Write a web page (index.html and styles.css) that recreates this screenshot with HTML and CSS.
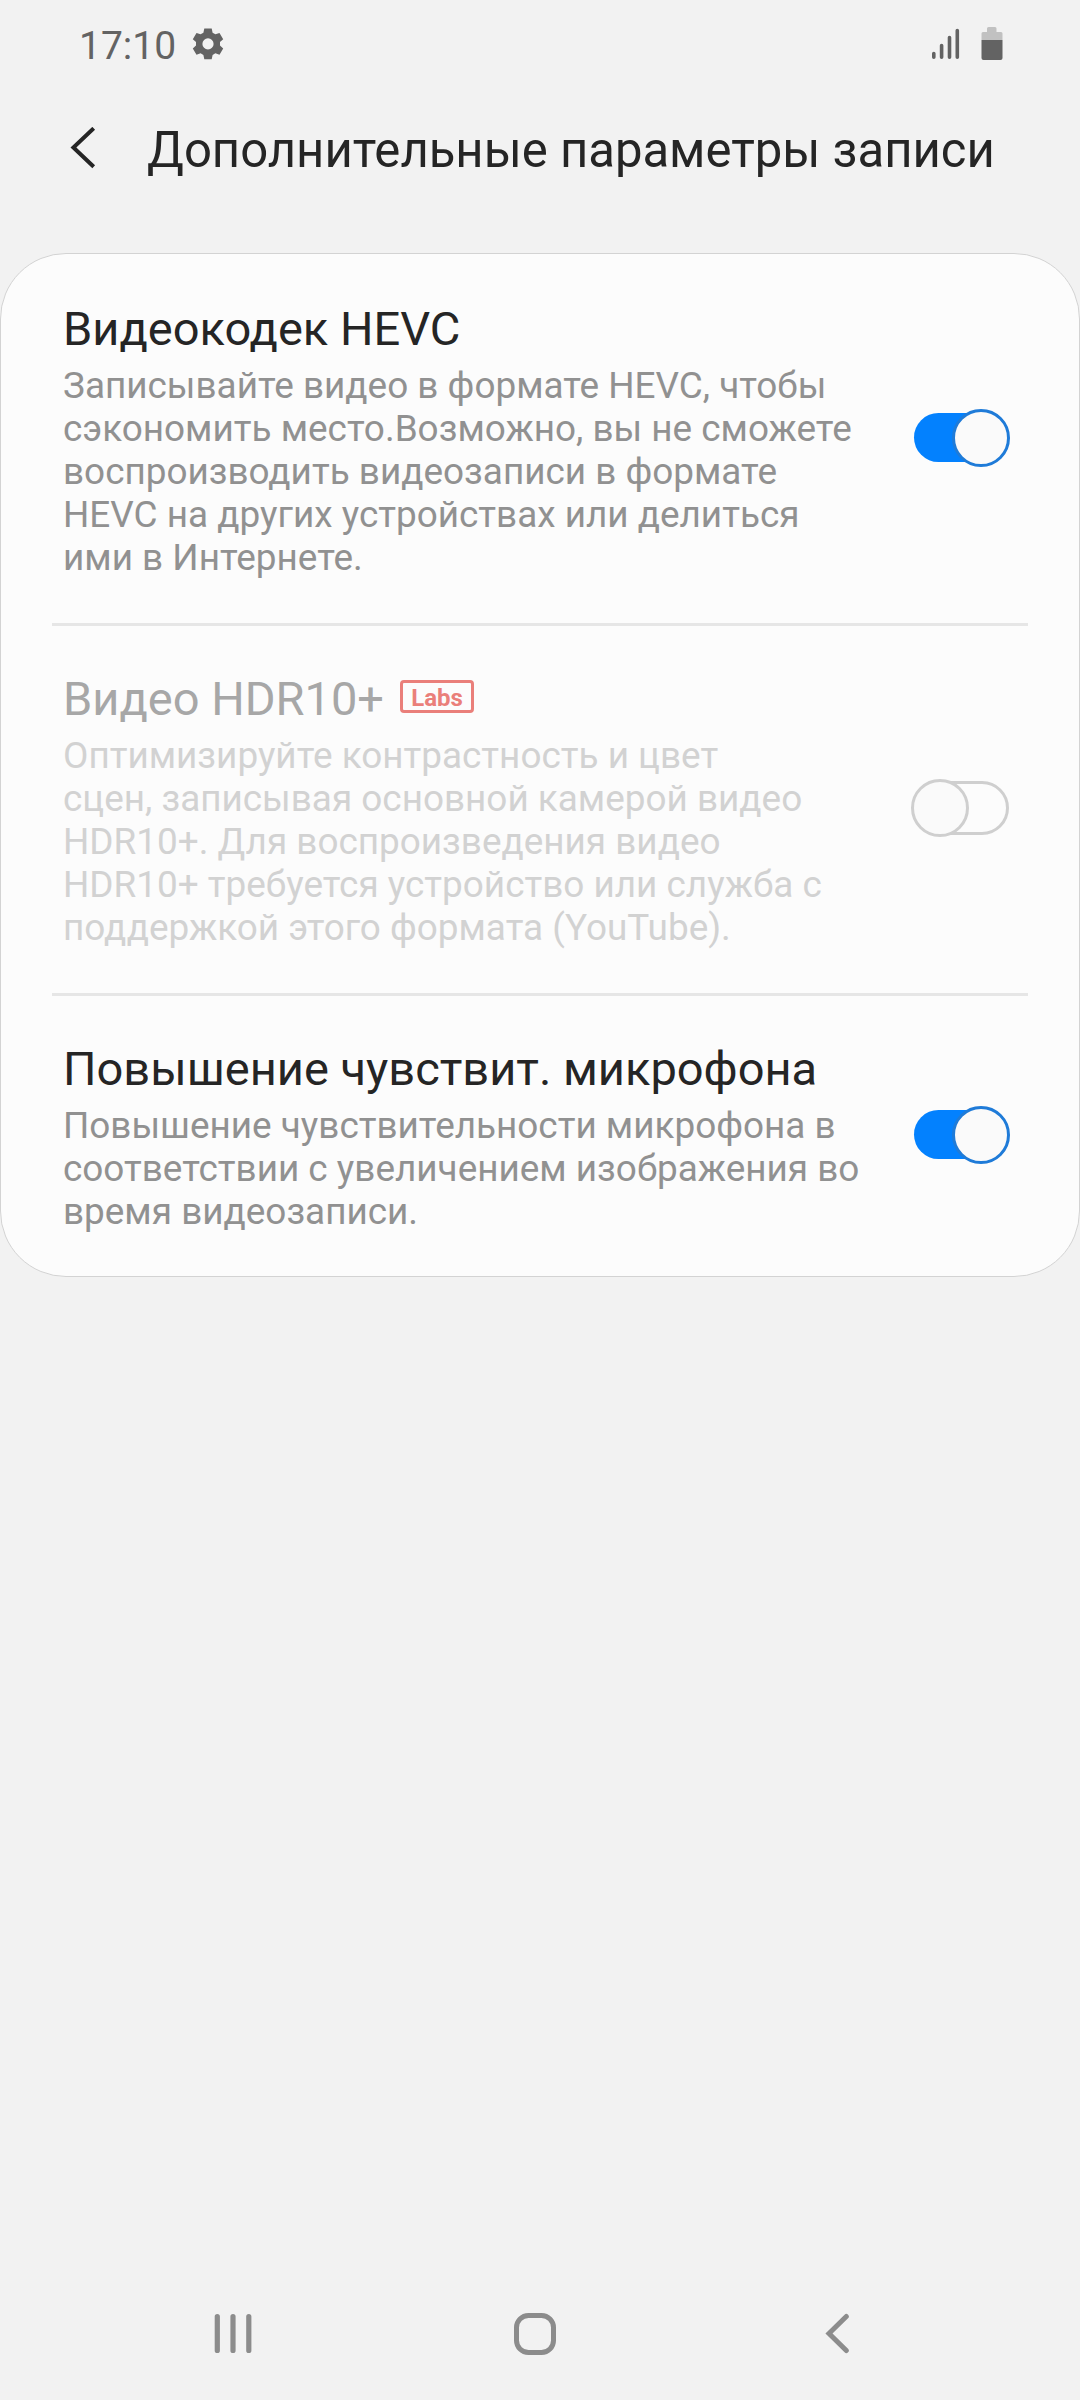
FILE: index.html
```html
<!DOCTYPE html>
<html lang="ru">
<head>
<meta charset="utf-8">
<title>Дополнительные параметры записи</title>
<link rel="stylesheet" href="styles.css">
</head>
<body>
<div class="screen">
  <div class="status">
    <span class="clock">17:10</span>
    <svg class="gear" width="32" height="32" viewBox="0 0 32 32"><path fill="#636363" fill-rule="evenodd" d="M12.3 0.5h7.4l.9 4.2 2.8 1.6 4.1-1.4 3.7 6.3-3.2 2.9v3.4l3.2 2.9-3.7 6.3-4.1-1.4-2.8 1.6-.9 4.3h-7.4l-.9-4.3-2.8-1.6-4.1 1.4-3.7-6.3 3.2-2.9v-3.4l-3.2-2.9 3.7-6.3 4.1 1.4 2.8-1.6zM16 10.3a5.6 5.6 0 1 0 0 11.2 5.6 5.6 0 0 0 0-11.2z"/></svg>
    <svg class="signal" width="28" height="32" viewBox="0 0 28 32"><path d="M1.8 25.6V29.2M9.6 17.6V29.2M17.5 9.6V29.2M25.3 2.6V29.2" stroke="#636363" stroke-width="3.6" stroke-linecap="round"/></svg>
    <svg class="battery" width="22" height="34" viewBox="0 0 22 34"><path fill="#c1c1c1" d="M6 1.500q0-1.500 1.500-1.500h6.500q1.500 0 1.500 1.500V5h4.500q1.500 0 1.500 1.500V13H.5V6.500Q.5 5 2 5h4z"/><path fill="#636363" d="M.5 13h21v18q0 2-2 2h-17q-2 0-2-2z"/></svg>
  </div>
  <div class="header">
    <svg class="back" width="26" height="44" viewBox="0 0 26 44"><path d="M23.700 1.300L3.400 20.500 23.700 39.700" fill="none" stroke="#252525" stroke-width="4"/></svg>
    <h1>Дополнительные параметры записи</h1>
  </div>
  <div class="card">
    <div class="item">
      <div class="text">
        <h2>Видеокодек HEVC</h2>
        <p>Записывайте видео в формате HEVC, чтобы<br>сэкономить место.Возможно, вы не сможете<br>воспроизводить видеозаписи в формате<br>HEVC на других устройствах или делиться<br>ими в Интернете.</p>
      </div>
      <div class="toggle on"><span class="knob"></span></div>
    </div>
    <div class="item disabled">
      <div class="text">
        <h2>Видео HDR10+<span class="labs">Labs</span></h2>
        <p>Оптимизируйте контрастность и цвет<br>сцен, записывая основной камерой видео<br>HDR10+. Для воспроизведения видео<br>HDR10+ требуется устройство или служба с<br>поддержкой этого формата (YouTube).</p>
      </div>
      <div class="toggle off"><span class="knob"></span></div>
    </div>
    <div class="item">
      <div class="text">
        <h2>Повышение чувствит. микрофона</h2>
        <p>Повышение чувствительности микрофона в<br>соответствии с увеличением изображения во<br>время видеозаписи.</p>
      </div>
      <div class="toggle on"><span class="knob"></span></div>
    </div>
  </div>
  <div class="nav">
    <svg width="40" height="42" viewBox="0 0 40 42"><path d="M3.300 3.500V37.500M19 3.500V37.500M34.800 3.500V37.500" stroke="#8c8c8c" stroke-width="5.200" stroke-linecap="round"/></svg>
    <svg class="home" width="42" height="42" viewBox="0 0 42 42"><rect x="2.500" y="2.500" width="37" height="37" rx="12" fill="none" stroke="#8c8c8c" stroke-width="5"/></svg>
    <svg width="26" height="42" viewBox="0 0 26 42"><path d="M21.300 3.500L4 20.500 21.300 37.500" fill="none" stroke="#8c8c8c" stroke-width="5" stroke-linecap="round"/></svg>
  </div>
</div>
</body>
</html>
```

FILE: styles.css
```css
*, *::before { box-sizing: border-box; margin: 0; }
body { background: #f2f2f2; font-family: Roboto, sans-serif; color: #252525; }
svg { display: block; flex: none; }
.screen { width: 1080px; height: 2400px; display: flex; flex-direction: column; }
.status { height: 88px; padding: 27px 77px 0 79px; display: flex; align-items: flex-start; }
.clock { width: 113px; font-size: 39px; line-height: 38px; color: #636363; white-space: nowrap; }
.gear { margin-top: 1px; }
.signal { margin: 1px 0 0 auto; }
.battery { margin-left: 21px; }
.header { height: 165px; padding: 39px 0 0 70px; display: flex; align-items: flex-start; }
h1 { margin-left: 51px; padding-top: 1px; font-size: 49.05px; line-height: 44px; font-weight: 400; white-space: nowrap; }
.card { height: 1024px; border: 1px solid #d3d3d3; border-radius: 66px; background: #fcfcfc; }
.item { position: relative; height: 370px; padding: 46px 69px 0 62px; display: flex; justify-content: space-between; }
.item + .item::before { content: ""; position: absolute; left: 51px; right: 51px; top: -1px; height: 3px; background: #e6e6e6; }
.item:last-child { height: 282px; }
h2 { display: flex; align-items: flex-start; height: 64px; font-size: 47px; line-height: 58px; font-weight: 400; white-space: nowrap; }
p { font-size: 36.9px; line-height: 43px; color: #919191; white-space: nowrap; }
.disabled h2 { color: #a7a7a7; }
.disabled p { color: #d2d2d2; }
.labs { width: 74px; height: 33px; margin: 10px 0 0 16px; border: 3px solid #ea7f7a; border-radius: 4px; color: #ea7f7a; font-size: 24px; line-height: 30px; font-weight: 700; text-align: center; }
.toggle { position: relative; flex: none; width: 97px; height: 58px; margin-top: 109px; }
.item:last-child .toggle { margin-top: 66px; }
.off { width: 98px; margin-right: 1px; }
.toggle::before { content: ""; position: absolute; left: 8px; right: 0; top: 2px; height: 54px; border: 3px solid #cfcfcf; border-radius: 27px; }
.knob { position: absolute; left: 0; top: 0; width: 58px; height: 58px; border: 3px solid #cfcfcf; border-radius: 50%; background: #fafafa; }
.on::before { left: 1px; right: 8px; top: 4px; height: 49px; border: 0; background: #0381fe; }
.on .knob { left: 39px; border-color: #1f7bd8; }
.nav { margin-top: auto; height: 87px; padding: 0 229px 0 214px; display: flex; }
.home { margin: 0 269px 0 260px; }
```
